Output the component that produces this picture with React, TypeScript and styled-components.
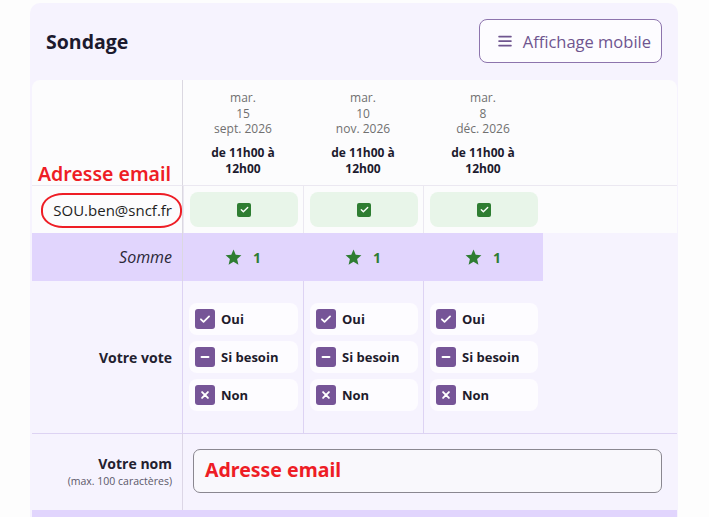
import React from 'react';
import styled, { createGlobalStyle } from 'styled-components';

const GlobalStyle = createGlobalStyle`
  html, body {
    margin: 0;
    padding: 0;
    background: #fdfdfd;
    font-family: "Open Sans", "Noto Sans", sans-serif;
    color: #1e1b2c;
  }
`;

const Page = styled.div`
  padding: 3px 31px 0 30px;
  height: 517px;
  overflow: hidden;
  box-sizing: border-box;
`;

const Card = styled.div`
  background: #f6f3fe;
  border-radius: 10px 10px 0 0;
  padding: 0 1px 0 2px;
  width: 648px;
  box-sizing: border-box;
`;

const Header = styled.div`
  display: flex;
  align-items: center;
  justify-content: space-between;
  padding: 16px 15px 17px 14px;
`;

const Title = styled.h1`
  margin: 0;
  font-size: 19.5px;
  font-weight: 700;
  color: #1c1a2e;
`;

const MobileButton = styled.button`
  display: flex;
  align-items: center;
  gap: 9px;
  height: 44px;
  padding: 0 10px 0 16px;
  border: 1px solid #8d74ad;
  border-radius: 8px;
  background: #fdfcff;
  color: #6f558f;
  font-family: inherit;
  font-size: 16.5px;
  cursor: pointer;
`;

const Grid = styled.div`
  display: grid;
  grid-template-columns: 151px 120px 120px 120px 1fr;
`;

type CellProps = { $bg?: string; $top?: string; $left?: string };

const Cell = styled.div<CellProps>`
  position: relative;
  background: ${p => p.$bg || 'transparent'};
  border-top: ${p => (p.$top ? `1px solid ${p.$top}` : 'none')};
  border-left: ${p => (p.$left ? `1px solid ${p.$left}` : 'none')};
  box-sizing: border-box;
`;

const LabelCell = styled(Cell)`
  display: flex;
  flex-direction: column;
  align-items: flex-end;
  justify-content: center;
  padding-right: 10px;
  border-right: 1px solid #dbd8e1;
`;

const DateCell = styled(Cell)`
  height: 105px;
  padding-top: 10px;
  text-align: center;
`;

const DateLine = styled.div`
  font-size: 12px;
  line-height: 15.5px;
  color: #707070;
`;

const TimeLine = styled.div`
  margin-top: 8px;
  font-size: 12px;
  line-height: 16px;
  font-weight: 700;
  color: #1c1a2e;
`;

const Email = styled.span`
  font-size: 15px;
  color: #1e1e1e;
`;

const AvailCell = styled(Cell)`
  height: 48px;
  padding: 6px 5px 6px 6px;
`;

const Avail = styled.div`
  height: 100%;
  border-radius: 8px;
  background: #e8f5e9;
  display: flex;
  align-items: center;
  justify-content: center;
`;

const GreenBox = styled.span`
  width: 14px;
  height: 14px;
  border-radius: 2px;
  background: #2e7d32;
  display: flex;
  align-items: center;
  justify-content: center;
`;

const SumCell = styled(Cell)`
  height: 48px;
  display: flex;
  align-items: center;
  justify-content: center;
  gap: 10px;
  padding-right: 2px;
  color: #2e7d32;
  font-weight: 700;
  font-size: 14px;
`;

const SumLabel = styled.span`
  font-style: italic;
  font-size: 16px;
  color: #2a2838;
`;

const VoteCell = styled(Cell)`
  height: 152px;
  padding: 22px 5px 0 6px;
  display: flex;
  flex-direction: column;
  gap: 6px;
`;

const Option = styled.label`
  height: 32px;
  border-radius: 8px;
  background: #fdfcff;
  display: flex;
  align-items: center;
  gap: 6px;
  padding-left: 6px;
  font-size: 13px;
  font-weight: 700;
  color: #1e1b2c;
`;

const PurpleBox = styled.span`
  width: 20px;
  height: 20px;
  border-radius: 3px;
  background: #765597;
  display: flex;
  align-items: center;
  justify-content: center;
`;

const RowLabel = styled.span`
  font-size: 14px;
  font-weight: 700;
  color: #23212f;
`;

const Hint = styled.span`
  font-size: 10.5px;
  color: #5b5868;
  margin-top: 1px;
`;

const NameCell = styled(Cell)`
  grid-column: 2 / span 4;
  height: 77px;
  padding: 15px 15px 0 10px;
`;

const NameInput = styled.div`
  position: relative;
  height: 44px;
  border: 1px solid #8a8790;
  border-radius: 7px;
  background: #f9f8fc;
  box-sizing: border-box;
`;

const BottomBar = styled.div`
  grid-column: 1 / -1;
  height: 8px;
  background: #e1d5fd;
`;

const RedNote = styled.span<{ $x: number; $y: number; $bold?: boolean }>`
  position: absolute;
  left: ${p => p.$x}px;
  top: ${p => p.$y}px;
  color: #ee1d25;
  font-family: "Noto Sans", "Open Sans", sans-serif;
  font-size: 19.5px;
  font-weight: ${p => (p.$bold ? 700 : 600)};
  white-space: nowrap;
  line-height: 1;
`;

const RedRing = styled.span`
  position: absolute;
  left: 9px;
  top: 7px;
  width: 141px;
  height: 35px;
  border: 2px solid #ee1d25;
  border-radius: 22px / 16px;
  box-sizing: border-box;
  pointer-events: none;
`;

const Hamburger = () => (
  <svg width="18" height="18" viewBox="0 0 24 24" fill="#6f558f">
    <rect x="3" y="5" width="18" height="2.4" rx="1" />
    <rect x="3" y="11" width="18" height="2.4" rx="1" />
    <rect x="3" y="17" width="18" height="2.4" rx="1" />
  </svg>
);

const Star = () => (
  <svg width="19" height="19" viewBox="0 0 24 24" fill="#2e7d32">
    <path d="M12 17.27L18.18 21l-1.64-7.03L22 9.24l-7.19-.61L12 2 9.19 8.63 2 9.24l5.46 4.73L5.82 21z" />
  </svg>
);

const Check = ({ size }: { size: number }) => (
  <svg width={size} height={size} viewBox="0 0 24 24" fill="none" stroke="#fff" strokeWidth="3" strokeLinecap="round" strokeLinejoin="round">
    <path d="M5 12.5l4.5 4.5L19 7.5" />
  </svg>
);

const Minus = () => (
  <svg width="14" height="14" viewBox="0 0 24 24" stroke="#fff" strokeWidth="3.2" strokeLinecap="round">
    <path d="M6 12h12" />
  </svg>
);

const Cross = () => (
  <svg width="14" height="14" viewBox="0 0 24 24" stroke="#fff" strokeWidth="3.2" strokeLinecap="round">
    <path d="M7 7l10 10M17 7L7 17" />
  </svg>
);

const dates = [
  { day: '15', month: 'sept. 2026' },
  { day: '10', month: 'nov. 2026' },
  { day: '8', month: 'déc. 2026' },
];

const WHITE = '#fcfcfd';
const SUM = '#e1d5fd';
const LINE = '#ebe8f1';
const LAV_LINE = '#ddd3f3';

const App: React.FC = () => {
  return (
    <>
      <GlobalStyle />
      <Page>
        <Card>
          <Header>
            <Title>Sondage</Title>
            <MobileButton>
              <Hamburger />
              Affichage mobile
            </MobileButton>
          </Header>

          <Grid>
            {/* dates */}
            <LabelCell $bg={WHITE} style={{ borderTopLeftRadius: 8 }}>
              <RedNote $x={6} $y={84}>Adresse email</RedNote>
            </LabelCell>
            {dates.map(d => (
              <DateCell key={d.day} $bg={WHITE}>
                <DateLine>mar.</DateLine>
                <DateLine>{d.day}</DateLine>
                <DateLine>{d.month}</DateLine>
                <TimeLine>
                  de 11h00 à
                  <br />
                  12h00
                </TimeLine>
              </DateCell>
            ))}
            <Cell $bg={WHITE} style={{ borderTopRightRadius: 8 }} />

            {/* participant */}
            <LabelCell $bg={WHITE} $top={LINE}>
              <Email>SOU.ben@sncf.fr</Email>
              <RedRing />
            </LabelCell>
            {dates.map(d => (
              <AvailCell key={d.day} $bg={WHITE} $top={LINE} $left={LINE}>
                <Avail>
                  <GreenBox>
                    <Check size={11} />
                  </GreenBox>
                </Avail>
              </AvailCell>
            ))}
            <Cell $bg={WHITE} $top={LINE} />

            {/* sum */}
            <LabelCell $bg={SUM}>
              <SumLabel>Somme</SumLabel>
            </LabelCell>
            {dates.map(d => (
              <SumCell key={d.day} $bg={SUM} $left={SUM}>
                <Star />1
              </SumCell>
            ))}
            <Cell />

            {/* vote */}
            <LabelCell style={{ borderRightColor: LAV_LINE }}>
              <RowLabel>Votre vote</RowLabel>
            </LabelCell>
            {dates.map((d, i) => (
              <VoteCell key={d.day} $left={i === 0 ? undefined : LAV_LINE}>
                <Option>
                  <PurpleBox>
                    <Check size={14} />
                  </PurpleBox>
                  Oui
                </Option>
                <Option>
                  <PurpleBox>
                    <Minus />
                  </PurpleBox>
                  Si besoin
                </Option>
                <Option>
                  <PurpleBox>
                    <Cross />
                  </PurpleBox>
                  Non
                </Option>
              </VoteCell>
            ))}
            <Cell />

            {/* name */}
            <LabelCell $top={LAV_LINE} style={{ borderRightColor: '#dcd6e6', paddingBottom: 2 }}>
              <RowLabel>Votre nom</RowLabel>
              <Hint>(max. 100 caractères)</Hint>
            </LabelCell>
            <NameCell $top={LAV_LINE}>
              <NameInput>
                <RedNote $x={11} $y={10} $bold>Adresse email</RedNote>
              </NameInput>
            </NameCell>

            <BottomBar />
          </Grid>
        </Card>
      </Page>
    </>
  );
};

export default App;
